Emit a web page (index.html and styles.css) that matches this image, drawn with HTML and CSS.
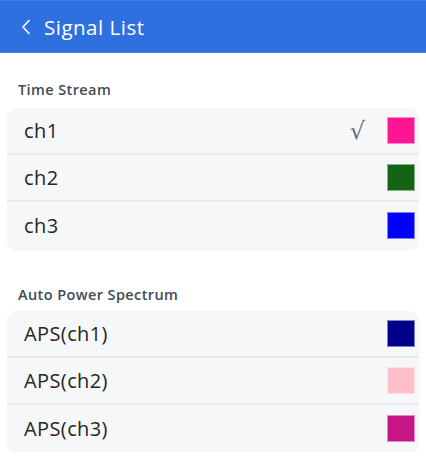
FILE: index.html
```html
<!DOCTYPE html>
<html>
<head>
<meta charset="utf-8">
<link rel="stylesheet" href="styles.css">
</head>
<body>
<header class="topbar">
  <span class="back">
    <svg width="10" height="16" viewBox="0 0 10 16"><path d="M8 1.5 L2 8 L8 14.5" fill="none" stroke="#fff" stroke-width="1.6" stroke-linecap="round" stroke-linejoin="round"/></svg>
  </span>
  <span class="title">Signal List</span>
</header>
<main class="content">
  <h2 class="section-title">Time Stream</h2>
  <div class="card">
    <div class="row"><span class="label">ch1</span><span class="check">√</span><span class="swatch" style="background:#ff1493"></span></div>
    <div class="row"><span class="label">ch2</span><span class="swatch" style="background:#136414"></span></div>
    <div class="row"><span class="label">ch3</span><span class="swatch" style="background:#0000ff"></span></div>
  </div>
  <h2 class="section-title second">Auto Power Spectrum</h2>
  <div class="card">
    <div class="row"><span class="label">APS(ch1)</span><span class="swatch" style="background:#00008b"></span></div>
    <div class="row"><span class="label">APS(ch2)</span><span class="swatch" style="background:#ffc0cb"></span></div>
    <div class="row"><span class="label">APS(ch3)</span><span class="swatch" style="background:#c71585"></span></div>
  </div>
</main>
</body>
</html>
```
FILE: styles.css
```css
* { box-sizing: border-box; }
html, body { margin: 0; padding: 0; background: #ffffff; }
body { font-family: "Open Sans", "Noto Sans", sans-serif; color: #262626; }

.topbar {
  height: 53px;
  background: #2f70e1;
  border-top: 1px solid #3a7cf0;
  border-bottom: 1px solid #3c7ef0;
  display: flex;
  align-items: center;
  padding-left: 21px;
  color: #fff;
}
.back { display: flex; align-items: center; width: 23px; }
.title { font-size: 20.5px; font-weight: 400; letter-spacing: 0.5px; }

.content { padding: 0 7px; }
.section-title {
  margin: 0;
  padding: 27px 0 8px 11px;
  font-size: 14.5px;
  line-height: 20px;
  font-weight: 600;
  letter-spacing: 0.4px;
  color: #444a56;
}
.section-title.second { padding-top: 36px; padding-bottom: 6px; }

.card {
  background: #f6f7f9;
  border-radius: 10px;
  box-shadow: 0 1px 2px rgba(0,0,0,0.06);
  overflow: hidden;
}
.row {
  height: 47px;
  display: flex;
  align-items: center;
  padding: 0 4px 0 17px;
  border-bottom: 2px solid #eaebee;
}
.row:last-child { border-bottom: none; }
.label { flex: 1; font-size: 20px; letter-spacing: 0.4px; color: #262626; }
.check { font-size: 24px; color: #6b7280; margin-right: 22px; font-family: "DejaVu Sans", sans-serif; }
.swatch {
  width: 28px;
  height: 27px;
  border: 1px solid rgba(255,255,255,0.5);
}
```
